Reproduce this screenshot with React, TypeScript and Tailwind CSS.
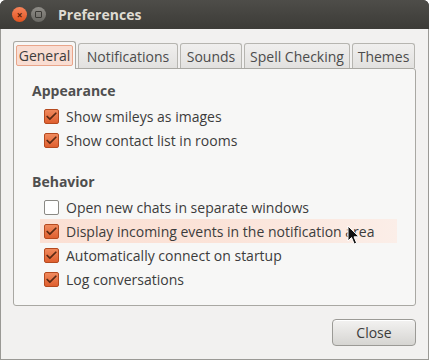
import { Check } from "lucide-react";

const font = { fontFamily: '"Open Sans", "DejaVu Sans", sans-serif' };

function Box({ checked }: { checked: boolean }) {
  return checked ? (
    <span className="flex h-[15px] w-[15px] shrink-0 items-center justify-center rounded-[2px] border border-[#b54a1f] bg-gradient-to-b from-[#f08a5d] to-[#df5f2e]">
      <Check size={13} strokeWidth={3.2} className="text-[#5a2a14]" />
    </span>
  ) : (
    <span className="h-[15px] w-[15px] shrink-0 rounded-[2px] border border-[#8a8984] bg-white" />
  );
}

function Row({ label, checked, hot }: { label: string; checked: boolean; hot?: boolean }) {
  return (
    <div
      className={`relative flex h-6 items-center gap-[7px] pl-[4px] ${
        hot ? "bg-gradient-to-r from-[#fbe0d4] via-[#fbe3d8] to-[#fbeee8]" : ""
      }`}
    >
      <Box checked={checked} />
      <span className="whitespace-nowrap">{label}</span>
      {hot && (
        <svg
          width="14"
          height="22"
          viewBox="0 0 14 22"
          className="absolute left-[307px] top-[6px]"
        >
          <path
            d="M1 1 L1 16 L4.5 12.5 L7.2 19 L9.6 18 L7 11.8 L12 11.8 Z"
            fill="#111"
            stroke="#fff"
            strokeWidth="1"
            strokeLinejoin="round"
          />
        </svg>
      )}
    </div>
  );
}

const tabs: [string, string][] = [
  ["General", "w-[63px]"],
  ["Notifications", "w-[100px]"],
  ["Sounds", "w-[62px]"],
  ["Spell Checking", "w-[106px]"],
  ["Themes", "w-[63px]"],
];

export default function App() {
  return (
    <div className="flex h-[360px] w-[429px] flex-col overflow-hidden rounded-t-[6px] bg-[#3c3b37]" style={font}>
      <div className="flex h-[29px] shrink-0 items-center bg-gradient-to-b from-[#4e4d49] to-[#3c3b37] pl-[12px]">
        <span className="flex h-[15px] w-[15px] items-center justify-center rounded-full bg-gradient-to-b from-[#f7845a] to-[#e0531e] text-[10px] font-bold leading-none text-[#5a1d05]">
          ×
        </span>
        <span className="ml-[4px] flex h-[15px] w-[15px] items-center justify-center rounded-full bg-gradient-to-b from-[#8f8d88] to-[#6a6964]">
          <span className="h-[7px] w-[7px] rounded-[1px] border border-[#3a3935]" />
        </span>
        <span className="ml-[12px] text-[14px] font-bold text-[#dfdbd2]">Preferences</span>
      </div>
      <div className="flex flex-1 flex-col border-x border-b border-[#9a9995] bg-[#f2f1f0] px-[12px] pt-[12px] text-[14px] text-[#3c3c3c]">
        <div className="flex items-end gap-[2px]">
          {tabs.map(([t, w], i) =>
            i === 0 ? (
              <div
                key={t}
                className={`relative z-10 -mb-px flex h-[28px] items-center justify-center rounded-t-[3px] border border-b-0 border-[#a9a8a3] bg-[#f7f7f6] ${w}`}
              >
                <span className="rounded-[2px] border border-[#e9a58a] bg-[#f9ddd2] px-[2px] leading-[19px]">
                  {t}
                </span>
              </div>
            ) : (
              <div
                key={t}
                className={`flex h-[25px] items-center justify-center whitespace-nowrap rounded-t-[3px] border border-b-0 border-[#b6b5b0] bg-gradient-to-b from-[#f0efee] to-[#e2e1df] text-[#4c4c4c] ${w}`}
              >
                {t}
              </div>
            ),
          )}
        </div>
        <div className="h-[238px] w-[403px] rounded-b-[3px] rounded-tr-[3px] border border-[#a9a8a3] bg-[#f7f7f6] pt-[11px]">
          <div className="pl-[18px] font-bold text-[#4f4f4f]">Appearance</div>
          <div className="mt-[3px] pl-[26px] pr-[18px]">
            <Row label="Show smileys as images" checked />
            <Row label="Show contact list in rooms" checked />
          </div>
          <div className="mt-[19px] pl-[18px] font-bold text-[#4f4f4f]">Behavior</div>
          <div className="mt-[3px] pl-[26px] pr-[18px]">
            <Row label="Open new chats in separate windows" checked={false} />
            <Row label="Display incoming events in the notification area" checked hot />
            <Row label="Automatically connect on startup" checked />
            <Row label="Log conversations" checked />
          </div>
        </div>
        <div className="mt-[13px] flex justify-end">
          <button className="h-[27px] w-[84px] rounded-[4px] border border-[#9b9a96] bg-gradient-to-b from-[#f3f2f1] to-[#d6d5d2] text-[#3c3c3c] shadow-[inset_0_1px_0_#fff]">
            Close
          </button>
        </div>
      </div>
    </div>
  );
}
